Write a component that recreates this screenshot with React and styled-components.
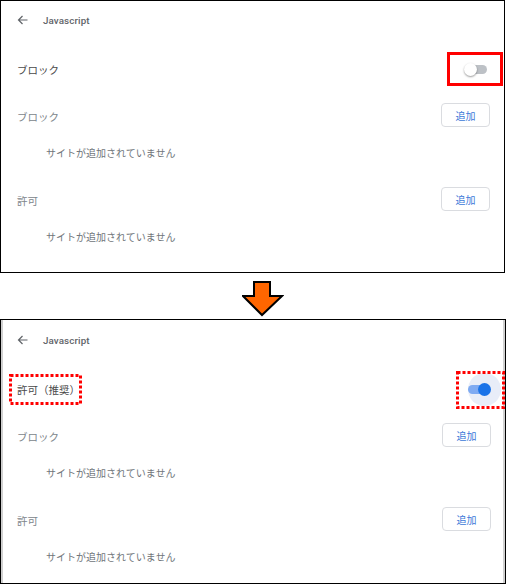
import React from "react";
import styled, { createGlobalStyle } from "styled-components";

const Global = createGlobalStyle`
  html, body { margin: 0; padding: 0; background: #fff; }
  body { font-family: Roboto, "Noto Sans CJK JP", "Noto Sans", sans-serif; }
`;

const Page = styled.div`
  width: 508px;
  display: flex;
  flex-direction: column;
`;

const Panel = styled.section`
  box-sizing: border-box;
  width: ${(p) => p.$width}px;
  height: ${(p) => p.$height}px;
  border: 1.5px solid #000;
  box-shadow: ${(p) => (p.$edge ? "inset 2px 0 0 #d0d0d0, inset -2px 0 0 #d0d0d0" : "none")};
  display: flex;
  flex-direction: column;
  padding: 0 14px 0 16px;
  background: #fff;
`;

const Header = styled.div`
  height: 38px;
  display: flex;
  align-items: center;
  gap: 15px;
  margin-top: ${(p) => p.$top || 0}px;
`;

const Title = styled.span`
  font-family: Roboto, "Noto Sans", sans-serif;
  font-weight: 500;
  font-size: 9.8px;
  color: #5f6368;
  letter-spacing: 0.1px;
`;

const ToggleRow = styled.div`
  position: relative;
  height: 40px;
  margin-top: 10px;
  display: flex;
  align-items: center;
  justify-content: space-between;
`;

const RowLabel = styled.span`
  position: relative;
  font-family: "Noto Sans CJK JP", sans-serif;
  font-size: 10.5px;
  color: #4a4a4a;
`;

const SectionHead = styled.div`
  height: 32px;
  margin-top: 10px;
  display: flex;
  align-items: center;
  justify-content: space-between;
`;

const SectionLabel = styled.span`
  font-family: "Noto Sans CJK JP", sans-serif;
  font-size: 10.5px;
  color: #80868b;
  padding-top: 2px;
`;

const AddButton = styled.button`
  box-sizing: border-box;
  width: 49px;
  height: 24px;
  border: 1px solid #dadce0;
  border-radius: 4px;
  background: #fff;
  font-family: "Noto Sans CJK JP", sans-serif;
  font-size: 10px;
  color: #3b78d8;
  padding: 0;
  display: flex;
  align-items: center;
  justify-content: center;
`;

const Empty = styled.div`
  height: 42px;
  display: flex;
  align-items: center;
  padding-left: 29px;
  font-family: "Noto Sans CJK JP", sans-serif;
  font-size: 10px;
  color: #70757a;
`;

const SwitchWrap = styled.span`
  position: relative;
  width: 26px;
  height: 13px;
  display: inline-block;
`;

const Halo = styled.span`
  position: absolute;
  width: 33px;
  height: 33px;
  border-radius: 50%;
  background: #e8edf8;
  right: -10px;
  top: -10px;
`;

const Track = styled.span`
  position: absolute;
  left: 3px;
  right: 3px;
  top: 2px;
  height: 9px;
  border-radius: 5px;
  background: ${(p) => (p.$on ? "#7eaaf2" : "#bdc1c6")};
`;

const Knob = styled.span`
  position: absolute;
  top: 0;
  width: 13px;
  height: 13px;
  border-radius: 50%;
  ${(p) => (p.$on ? "right: 0;" : "left: 0;")}
  background: ${(p) => (p.$on ? "#1a73e8" : "#fff")};
  box-shadow: ${(p) => (p.$on ? "none" : "0 1px 2px rgba(0,0,0,0.4)")};
`;

const Mark = styled.span`
  position: absolute;
  pointer-events: none;
  left: ${(p) => p.$x}px;
  top: ${(p) => p.$y}px;
  width: ${(p) => p.$w}px;
  height: ${(p) => p.$h}px;
  display: block;
`;

const SolidMark = styled(Mark)`
  box-sizing: border-box;
  border: 3px solid #ff0000;
`;

const ArrowRow = styled.div`
  height: 46px;
  display: flex;
  align-items: flex-start;
  padding-left: 242px;
  padding-top: 8px;
  box-sizing: border-box;
`;

const BackArrow = () => (
  <svg width="11" height="10" viewBox="0 0 11 10" fill="none">
    <path d="M10.5 5H1.5M5.5 1L1.5 5L5.5 9" stroke="#5f6368" strokeWidth="1.2" />
  </svg>
);

const DottedBox = ({ x, y, w, h }) => (
  <Mark $x={x} $y={y} $w={w} $h={h}>
    <svg width={w} height={h}>
      <rect
        x="1.5"
        y="1.5"
        width={w - 3}
        height={h - 3}
        fill="none"
        stroke="#ff0000"
        strokeWidth="3"
        strokeDasharray="3 2"
      />
    </svg>
  </Mark>
);

const Switch = ({ on }) => (
  <SwitchWrap>
    {on && <Halo />}
    <Track $on={on} />
    <Knob $on={on} />
  </SwitchWrap>
);

const Section = ({ label }) => (
  <>
    <SectionHead>
      <SectionLabel>{label}</SectionLabel>
      <AddButton>追加</AddButton>
    </SectionHead>
    <Empty>サイトが追加されていません</Empty>
  </>
);

export default function App() {
  return (
    <Page>
      <Global />
      <Panel $width={505} $height={273}>
        <Header>
          <BackArrow />
          <Title>Javascript</Title>
        </Header>
        <ToggleRow>
          <RowLabel>ブロック</RowLabel>
          <Switch on={false} />
          <SolidMark $x={430} $y={3} $w={56} $h={34} />
        </ToggleRow>
        <Section label="ブロック" />
        <Section label="許可" />
      </Panel>
      <ArrowRow>
        <svg width="42" height="36" viewBox="0 0 42 36">
          <polygon
            points="12,1 28,1 28,15 40,15 20,34 1,15 12,15"
            fill="#ff6600"
            stroke="#000"
            strokeWidth="2"
            strokeLinejoin="miter"
          />
        </svg>
      </ArrowRow>
      <Panel $width={506} $height={265} $edge>
        <Header $top={1}>
          <BackArrow />
          <Title>Javascript</Title>
        </Header>
        <ToggleRow>
          <RowLabel>許可（推奨）</RowLabel>
          <Switch on />
          <DottedBox x={-8} y={5} w={73} h={31} />
          <DottedBox x={439} y={2} w={49} h={38} />
        </ToggleRow>
        <Section label="ブロック" />
        <Section label="許可" />
      </Panel>
    </Page>
  );
}
